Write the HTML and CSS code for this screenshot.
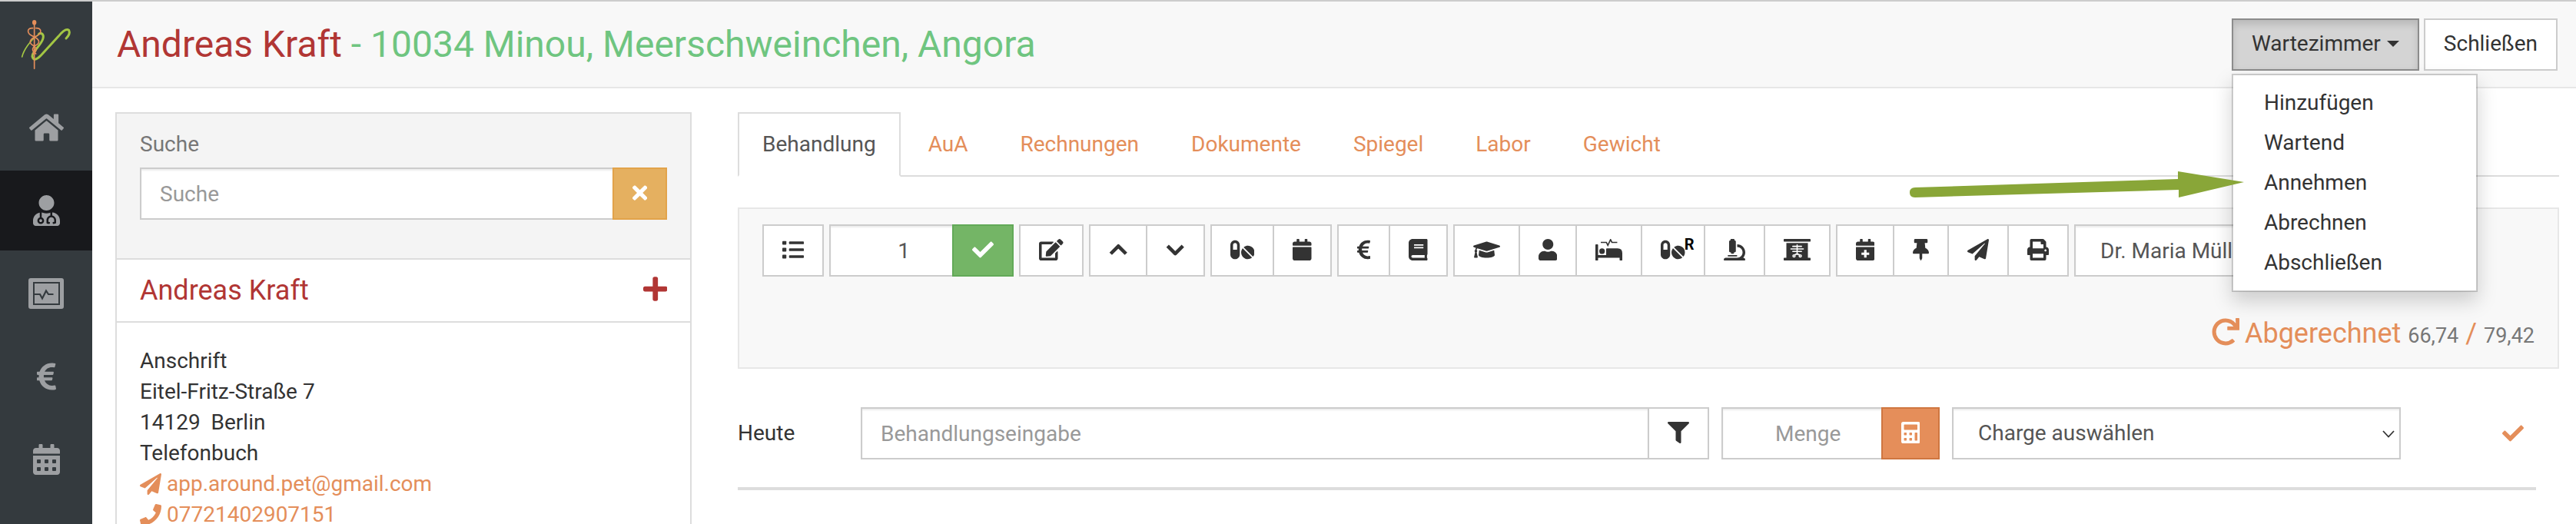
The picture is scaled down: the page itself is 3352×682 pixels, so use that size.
FILE: index.html
```
<!DOCTYPE html>
<html lang="de">
<head>
<meta charset="utf-8">
<title>Andreas Kraft – Behandlung</title>
<link rel="stylesheet" href="styles.css">
</head>
<body>
<div class="app">
  <nav class="sidebar" aria-label="Hauptmenü">
    <a class="brand" href="#" aria-label="Start">
      <svg viewBox="0 0 240 240" stroke-linecap="round">
        <path d="M92 72C104 66 112 76 108 90C102 116 64 142 66 160Q72 184 98 158L168 82Q196 48 209 58Q216 72 198 90" stroke="#a3c644" stroke-width="9"/>
        <path d="M26 162C32 138 56 98 92 74" stroke="#a3c644" stroke-width="5"/>
        <g stroke="#e58e5a" stroke-width="5">
          <path d="M74 30V208"/>
          <path d="M68 50C44 48 44 70 66 80C98 94 98 108 78 118C62 128 66 142 80 150"/>
          <path d="M80 50C104 48 104 70 84 80C52 94 52 108 70 118C86 128 84 142 68 150"/>
        </g>
        <ellipse cx="74" cy="28" rx="8" ry="10" fill="#e58e5a"/>
      </svg>
    </a>
    <a class="nav-item" href="#" aria-label="Start"><svg viewBox="0 0 576 512"><path d="M280.37 148.26L96 300.11V464a16 16 0 0 0 16 16l112.06-.29a16 16 0 0 0 15.92-16V368a16 16 0 0 1 16-16h64a16 16 0 0 1 16 16v95.64a16 16 0 0 0 16 16.05L464 480a16 16 0 0 0 16-16V300L295.67 148.26a12.19 12.19 0 0 0-15.3 0zM571.6 251.47L488 182.56V44.05a12 12 0 0 0-12-12h-56a12 12 0 0 0-12 12v72.61L318.47 43a48 48 0 0 0-61 0L4.34 251.47a12 12 0 0 0-1.6 16.9l25.5 31A12 12 0 0 0 45.15 301l235.22-193.74a12.19 12.19 0 0 1 15.3 0L530.9 301a12 12 0 0 0 16.9-1.6l25.5-31a12 12 0 0 0-1.7-16.93z"/></svg></a>
    <a class="nav-item active" href="#" aria-label="Patienten"><svg viewBox="0 0 448 512"><path d="M224 256c70.7 0 128-57.3 128-128S294.7 0 224 0 96 57.3 96 128s57.3 128 128 128zM104 424c0 13.3 10.7 24 24 24s24-10.7 24-24-10.7-24-24-24-24 10.7-24 24zm216-135.4v49c36.5 7.4 64 39.8 64 78.4v41.7c0 7.6-5.4 14.2-12.9 15.7l-32.2 6.4c-4.3.9-8.5-1.9-9.4-6.3l-3.1-15.7c-.9-4.3 1.9-8.6 6.3-9.4l19.3-3.9V416c0-62.8-96-65.1-96 1.9v26.7l19.3 3.9c4.3.9 7.1 5.1 6.3 9.4l-3.1 15.7c-.9 4.3-5.1 7.1-9.4 6.3l-31.2-4.2c-7.9-1.1-13.8-7.8-13.8-15.9V416c0-38.6 27.5-70.9 64-78.4v-45.2c-2.2.7-4.4 1.1-6.6 1.9-18 6.3-37.3 9.8-57.4 9.8s-39.4-3.5-57.4-9.8c-7.4-2.6-14.9-4.2-22.6-5.2v81.6c23.1 6.9 40 28.1 40 53.4 0 30.9-25.1 56-56 56s-56-25.1-56-56c0-25.3 16.9-46.5 40-53.4v-80.4C48.5 301 0 355.8 0 422.4v44.8C0 491.9 20.1 512 44.8 512h358.4c24.7 0 44.8-20.1 44.8-44.8v-44.8c0-72-56.8-130.3-128-133.8z"/></svg></a>
    <a class="nav-item" href="#" aria-label="Monitor"><svg viewBox="0 0 46 40"><path fill-rule="evenodd" d="M3 0H43Q46 0 46 3V37Q46 40 43 40H3Q0 40 0 37V3Q0 0 3 0ZM6 5V35H41V5Z"/><path d="M8 7H39V33H8Z"/><path d="M8 21H15L18 26.500L23 16.500L26 21H32.500" fill="none" stroke="#343a3e" stroke-width="2.200"/></svg></a>
    <a class="nav-item" href="#" aria-label="Finanzen"><svg viewBox="0 0 320 512"><path d="M310.706 413.765c-1.314-6.63-7.835-10.872-14.424-9.369-10.692 2.439-27.422 5.413-45.426 5.413-56.763 0-101.929-34.79-121.461-85.449h113.689a12 12 0 0 0 11.708-9.369l6.373-28.36c1.686-7.502-4.019-14.631-11.708-14.631H115.22c-1.21-14.328-1.414-28.287.137-42.245H261.95a12 12 0 0 0 11.723-9.434l6.512-29.755c1.638-7.484-4.061-14.566-11.723-14.566H130.184c20.633-44.991 62.69-75.03 117.619-75.03 14.486 0 28.564 2.25 37.851 4.145 6.216 1.268 12.347-2.498 14.002-8.623l11.991-44.368c1.822-6.741-2.465-13.616-9.326-14.917C290.217 34.912 270.71 32 249.635 32 152.451 32 74.03 92.252 45.075 176H12c-6.627 0-12 5.373-12 12v29.755c0 6.627 5.373 12 12 12h21.569c-1.009 13.607-1.181 29.287-.181 42.245H12c-6.627 0-12 5.373-12 12v28.36c0 6.627 5.373 12 12 12h30.114C67.139 414.692 145.264 480 249.635 480c26.301 0 48.562-4.544 61.101-7.788 6.167-1.595 10.027-7.708 8.788-13.957l-8.818-44.49z"/></svg></a>
    <a class="nav-item" href="#" aria-label="Kalender"><svg viewBox="0 0 448 512"><path fill-rule="evenodd" d="M0 464c0 26.500 21.500 48 48 48h352c26.500 0 48-21.500 48-48V192H0zM76 256h40q12 0 12 12v40q0 12-12 12H76q-12 0-12-12v-40q0-12 12-12zM204 256h40q12 0 12 12v40q0 12-12 12h-40q-12 0-12-12v-40q0-12 12-12zM332 256h40q12 0 12 12v40q0 12-12 12h-40q-12 0-12-12v-40q0-12 12-12zM76 384h40q12 0 12 12v40q0 12-12 12H76q-12 0-12-12v-40q0-12 12-12zM204 384h40q12 0 12 12v40q0 12-12 12h-40q-12 0-12-12v-40q0-12 12-12zM332 384h40q12 0 12 12v40q0 12-12 12h-40q-12 0-12-12v-40q0-12 12-12z"/><path d="M400 64h-48V16c0-8.800-7.200-16-16-16h-32c-8.800 0-16 7.200-16 16v48H160V16c0-8.800-7.200-16-16-16h-32c-8.800 0-16 7.200-16 16v48H48C21.500 64 0 85.500 0 112v48h448v-48c0-26.500-21.500-48-48-48z"/></svg></a>
  </nav>

  <div class="page">
    <header class="topbar">
      <h1 class="title">Andreas Kraft <span class="patient">- 10034 Minou, Meerschweinchen, Angora</span></h1>
      <div class="actions">
        <div class="dropdown">
          <button class="btn pressed" type="button" aria-expanded="true">Wartezimmer <span class="caret"></span></button>
          <ul class="menu">
            <li><a href="#">Hinzufügen</a></li>
            <li><a href="#">Wartend</a></li>
            <li><a href="#">Annehmen</a></li>
            <li><a href="#">Abrechnen</a></li>
            <li><a href="#">Abschließen</a></li>
          </ul>
          <svg class="pointer" viewBox="0 0 436 36" aria-hidden="true"><path d="M8 22L350 11V1L436 15L351 35V25L8 35Q1 35 1 28.500Q1 22 8 22Z" fill="#89a638"/></svg>
        </div>
        <button class="btn" type="button">Schließen</button>
      </div>
    </header>

    <main class="content">
      <aside class="panel">
        <div class="search">
          <label for="suche">Suche</label>
          <div class="joined">
            <input class="field grow" id="suche" type="text" placeholder="Suche">
            <button class="btn warning" type="button" aria-label="Leeren"><svg viewBox="0 0 352 512"><path d="M242.720 256l100.070-100.070c12.280-12.280 12.280-32.190 0-44.480l-22.240-22.240c-12.280-12.280-32.190-12.280-44.480 0L176 189.280 75.930 89.210c-12.280-12.280-32.190-12.280-44.480 0L9.210 111.450c-12.280 12.280-12.280 32.190 0 44.480L109.280 256 9.210 356.070c-12.280 12.280-12.280 32.190 0 44.480l22.240 22.240c12.280 12.280 32.200 12.280 44.480 0L176 322.720l100.070 100.070c12.280 12.280 32.200 12.280 44.480 0l22.240-22.240c12.280-12.280 12.280-32.190 0-44.480L242.720 256z"/></svg></button>
          </div>
        </div>
        <div class="owner">
          <h2>Andreas Kraft</h2>
          <a href="#" aria-label="Hinzufügen"><svg viewBox="0 0 448 512"><path d="M416 208H272V64c0-17.670-14.330-32-32-32h-32c-17.670 0-32 14.330-32 32v144H32c-17.670 0-32 14.330-32 32v32c0 17.670 14.330 32 32 32h144v144c0 17.670 14.330 32 32 32h32c17.670 0 32-14.330 32-32V304h144c17.670 0 32-14.330 32-32v-32c0-17.670-14.330-32-32-32z"/></svg></a>
        </div>
        <div class="address">
          <div>Anschrift</div>
          <div>Eitel-Fritz-Straße 7</div>
          <div>14129&nbsp; Berlin</div>
          <div>Telefonbuch</div>
          <a class="contact" href="#"><svg viewBox="0 0 512 512"><path d="M476 3.200L12.500 270.600c-18.100 10.400-15.800 35.600 2.200 43.200L121 358.400l287.300-253.200c5.500-4.900 13.300 2.600 8.600 8.300L176 407v80.500c0 23.600 28.500 32.900 42.500 15.800L282 426l124.600 52.200c14.200 6 30.400-2.900 33-18.200l72-432C515 7.800 493.300-6.800 476 3.200z"/></svg>app.around.pet@gmail.com</a>
          <a class="contact" href="#"><svg viewBox="0 0 512 512"><path d="M493.400 24.600l-104-24c-11.300-2.600-22.900 3.300-27.500 13.900l-48 112c-4.200 9.800-1.400 21.300 6.900 28l60.600 49.600c-36 76.700-98.900 140.500-177.200 177.200l-49.600-60.600c-6.800-8.300-18.200-11.100-28-6.900l-112 48C3.900 366.500-2 378.100.6 389.400l24 104C27.100 504.200 36.700 512 48 512c256.100 0 464-207.500 464-464 0-11.200-7.700-20.900-18.600-23.400z"/></svg>07721402907151</a>
        </div>
      </aside>

      <section class="work">
        <nav class="tabs" aria-label="Bereiche">
          <a class="tab current" href="#">Behandlung</a>
          <a class="tab" href="#">AuA</a>
          <a class="tab" href="#">Rechnungen</a>
          <a class="tab" href="#">Dokumente</a>
          <a class="tab" href="#">Spiegel</a>
          <a class="tab" href="#">Labor</a>
          <a class="tab" href="#">Gewicht</a>
        </nav>

        <div class="well">
          <div class="toolbar">
            <button class="btn" type="button" aria-label="Liste"><svg viewBox="0 0 512 512"><rect y="48" width="96" height="88" rx="16"/><rect y="212" width="96" height="88" rx="16"/><rect y="376" width="96" height="88" rx="16"/><rect x="160" y="60" width="352" height="64" rx="16"/><rect x="160" y="224" width="352" height="64" rx="16"/><rect x="160" y="388" width="352" height="64" rx="16"/></svg></button>
            <div class="joined">
              <input class="field count" type="text" value="1" aria-label="Anzahl">
              <button class="btn success" type="button" aria-label="Übernehmen"><svg viewBox="0 0 512 512"><path d="M173.898 439.404l-166.400-166.400c-9.997-9.997-9.997-26.206 0-36.204l36.203-36.204c9.997-9.998 26.207-9.998 36.204 0L192 312.690 432.095 72.596c9.997-9.997 26.207-9.997 36.204 0l36.203 36.204c9.997 9.997 9.997 26.206 0 36.204l-294.400 294.401c-9.998 9.997-26.207 9.997-36.204-.001z"/></svg></button>
            </div>
            <button class="btn" type="button" aria-label="Bearbeiten"><svg viewBox="0 0 576 512"><path d="M402.600 83.200l90.200 90.200c3.800 3.800 3.800 10 0 13.800L274.400 405.600l-92.800 10.300c-12.400 1.400-22.900-9.100-21.500-21.500l10.300-92.800L388.800 83.200c3.800-3.800 10-3.800 13.800 0zm162-22.900l-48.800-48.800c-15.200-15.200-39.900-15.200-55.200 0l-35.400 35.400c-3.800 3.800-3.800 10 0 13.800l90.200 90.200c3.800 3.800 10 3.800 13.800 0l35.400-35.400c15.200-15.300 15.200-40 0-55.200zM384 346.200V448H64V128h229.800c3.200 0 6.200-1.300 8.500-3.500l40-40c7.600-7.600 2.200-20.500-8.500-20.500H48C21.500 64 0 85.500 0 112v352c0 26.500 21.500 48 48 48h352c26.500 0 48-21.500 48-48V306.200c0-10.700-12.900-16-20.500-8.500l-40 40c-2.200 2.300-3.500 5.300-3.500 8.500z"/></svg></button>
            <div class="joined">
              <button class="btn" type="button" aria-label="Nach oben"><svg viewBox="0 0 448 512"><path d="M42 352L224 170L406 352" fill="none" stroke="currentColor" stroke-width="84" stroke-linejoin="round"/></svg></button>
              <button class="btn" type="button" aria-label="Nach unten"><svg viewBox="0 0 448 512"><path d="M42 166L224 348L406 166" fill="none" stroke="currentColor" stroke-width="84" stroke-linejoin="round"/></svg></button>
            </div>
            <div class="joined">
              <button class="btn" type="button" aria-label="Medikamente"><svg viewBox="0 0 576 512"><path d="M112 32C50.100 32 0 82.100 0 144v224c0 61.900 50.100 112 112 112s112-50.100 112-112V144c0-61.900-50.100-112-112-112zm48 224H64V144c0-26.500 21.500-48 48-48s48 21.500 48 48v112zm139.700-29.700c-3.500-3.500-9.400-3.100-12.300.8-45.300 62.500-40.400 150.100 15.900 206.400 56.300 56.300 143.900 61.200 206.400 15.900 4-2.900 4.300-8.800.8-12.300L299.700 226.300zm229.800-19c-56.300-56.300-143.900-61.200-206.400-15.900-4 2.900-4.300 8.800-.8 12.300l210.800 210.800c3.500 3.500 9.400 3.100 12.300-.8 45.300-62.600 40.500-150.100-15.900-206.400z"/></svg></button>
              <button class="btn" type="button" aria-label="Termin"><svg viewBox="0 0 448 512"><path d="M12 192h424c6.600 0 12 5.400 12 12v260c0 26.500-21.500 48-48 48H48c-26.500 0-48-21.500-48-48V204c0-6.600 5.400-12 12-12zm436-44v-36c0-26.500-21.500-48-48-48h-48V12c0-6.600-5.400-12-12-12h-40c-6.600 0-12 5.400-12 12v52H160V12c0-6.600-5.400-12-12-12h-40c-6.600 0-12 5.400-12 12v52H48C21.500 64 0 85.500 0 112v36c0 6.600 5.400 12 12 12h424c6.600 0 12-5.400 12-12z"/></svg></button>
            </div>
            <div class="joined">
              <button class="btn" type="button" aria-label="Preis"><svg viewBox="0 0 320 512"><path d="M310.706 413.765c-1.314-6.630-7.835-10.872-14.424-9.369-10.692 2.439-27.422 5.413-45.426 5.413-56.763 0-101.929-34.790-121.461-85.449h113.689a12 12 0 0 0 11.708-9.369l6.373-28.360c1.686-7.502-4.019-14.631-11.708-14.631H115.220c-1.210-14.328-1.414-28.287.137-42.245H261.950a12 12 0 0 0 11.723-9.434l6.512-29.755c1.638-7.484-4.061-14.566-11.723-14.566H130.184c20.633-44.991 62.690-75.030 117.619-75.030 14.486 0 28.564 2.250 37.851 4.145 6.216 1.268 12.347-2.498 14.002-8.623l11.991-44.368c1.822-6.741-2.465-13.616-9.326-14.917C290.217 34.912 270.710 32 249.635 32 152.451 32 74.030 92.252 45.075 176H12c-6.627 0-12 5.373-12 12v29.755c0 6.627 5.373 12 12 12h21.569c-1.009 13.607-1.181 29.287-.181 42.245H12c-6.627 0-12 5.373-12 12v28.360c0 6.627 5.373 12 12 12h30.114C67.139 414.692 145.264 480 249.635 480c26.301 0 48.562-4.544 61.101-7.788 6.167-1.595 10.027-7.708 8.788-13.957l-8.818-44.490z"/></svg></button>
              <button class="btn" type="button" aria-label="Buch"><svg viewBox="0 0 448 512"><path d="M448 360V24c0-13.300-10.700-24-24-24H96C43 0 0 43 0 96v320c0 53 43 96 96 96h328c13.300 0 24-10.700 24-24v-16c0-7.500-3.500-14.300-8.900-18.700-4.200-15.400-4.200-59.300 0-74.700 5.400-4.300 8.900-11.100 8.900-18.600zM128 134c0-3.300 2.700-6 6-6h212c3.300 0 6 2.700 6 6v20c0 3.300-2.700 6-6 6H134c-3.300 0-6-2.700-6-6v-20zm0 64c0-3.300 2.700-6 6-6h212c3.300 0 6 2.700 6 6v20c0 3.300-2.700 6-6 6H134c-3.300 0-6-2.700-6-6v-20zm253.400 250H96c-17.700 0-32-14.300-32-32 0-17.600 14.400-32 32-32h285.400c-1.900 17.100-1.900 46.900 0 64z"/></svg></button>
            </div>
            <div class="joined">
              <button class="btn" type="button" aria-label="Diagnose"><svg viewBox="0 0 640 512"><path d="M622.340 153.200L343.400 67.500c-15.200-4.670-31.600-4.670-46.790 0L17.660 153.200c-23.540 7.230-23.540 38.360 0 45.590l48.630 14.940c-10.670 13.190-17.230 29.280-17.880 46.900C38.780 266.150 32 276.110 32 288c0 10.780 5.680 19.850 13.860 25.650L20.330 428.530C18.110 438.520 25.710 448 35.940 448h56.110c10.240 0 17.840-9.480 15.620-19.470L82.140 313.650C90.320 307.850 96 298.780 96 288c0-11.570-6.470-21.250-15.660-26.870.76-15.020 8.440-28.300 20.690-36.720L296.600 284.500c9.060 2.780 26.440 6.250 46.790 0l278.950-85.700c23.550-7.240 23.550-38.360 0-45.600zM352.790 315.090c-28.530 8.760-52.840 3.920-65.590 0l-145.020-44.550L128 384c0 35.350 85.960 64 192 64s192-28.650 192-64l-14.180-113.470-145.030 44.560z"/></svg></button>
              <button class="btn" type="button" aria-label="Person"><svg viewBox="0 0 448 512"><path d="M224 256c70.700 0 128-57.300 128-128S294.700 0 224 0 96 57.300 96 128s57.300 128 128 128zm89.600 32h-16.700c-22.200 10.200-46.900 16-72.900 16s-50.600-5.800-72.900-16h-16.700C60.200 288 0 348.200 0 422.400V464c0 26.500 21.500 48 48 48h352c26.500 0 48-21.500 48-48v-41.600c0-74.200-60.200-134.400-134.400-134.400z"/></svg></button>
              <button class="btn" type="button" aria-label="Station"><svg viewBox="0 0 640 512"><path d="M16 128H48Q64 128 64 144V384H256V240Q256 224 272 224H528Q640 224 640 336V496Q640 512 624 512H592Q576 512 576 496V448H64V496Q64 512 48 512H16Q0 512 0 496V144Q0 128 16 128Z"/><circle cx="158" cy="292" r="66"/><path d="M128 82H262L296 152L360 16L394 82H520" fill="none" stroke="currentColor" stroke-width="30"/></svg></button>
              <button class="btn badge-host" type="button" aria-label="Rezept"><svg viewBox="0 0 576 512"><path d="M112 32C50.100 32 0 82.100 0 144v224c0 61.900 50.100 112 112 112s112-50.100 112-112V144c0-61.900-50.100-112-112-112zm48 224H64V144c0-26.500 21.500-48 48-48s48 21.500 48 48v112zm139.700-29.700c-3.500-3.500-9.400-3.100-12.300.8-45.300 62.500-40.400 150.100 15.900 206.400 56.300 56.300 143.900 61.200 206.400 15.900 4-2.900 4.300-8.800.8-12.300L299.700 226.300zm229.800-19c-56.300-56.300-143.900-61.200-206.400-15.900-4 2.900-4.300 8.800-.8 12.300l210.800 210.800c3.500 3.500 9.400 3.100 12.300-.8 45.300-62.600 40.500-150.100-15.900-206.400z"/></svg><span class="badge">R</span></button>
              <button class="btn" type="button" aria-label="Labor"><svg viewBox="0 0 512 512"><path d="M160 320h12v16c0 8.840 7.160 16 16 16h40c8.840 0 16-7.160 16-16v-16h12c17.670 0 32-14.330 32-32V64c0-17.670-14.330-32-32-32V16c0-8.840-7.160-16-16-16h-64c-8.840 0-16 7.160-16 16v16c-17.670 0-32 14.330-32 32v224c0 17.670 14.330 32 32 32zm304 128h-1.290C493.240 413.990 512 369.200 512 320c0-105.880-86.120-192-192-192v64c70.580 0 128 57.420 128 128s-57.420 128-128 128H48c-26.510 0-48 21.490-48 48 0 8.840 7.160 16 16 16h480c8.840 0 16-7.160 16-16 0-26.510-21.490-48-48-48zm-360-32h208c4.420 0 8-3.580 8-8v-16c0-4.420-3.580-8-8-8H104c-4.420 0-8 3.580-8 8v16c0 4.420 3.580 8 8 8z"/></svg></button>
              <button class="btn" type="button" aria-label="Röntgen"><svg viewBox="0 0 640 512"><rect width="640" height="64" rx="14"/><rect y="448" width="640" height="64" rx="14"/><path d="M64 96H576V460H64Z"/><g fill="none" stroke="#fff" stroke-width="28" stroke-linecap="round"><path d="M320 142V372M216 176H424M172 236H468M216 296H424M320 352L270 376M320 352L370 376"/><circle cx="246" cy="404" r="26"/><circle cx="394" cy="404" r="26"/></g></svg></button>
            </div>
            <div class="joined">
              <button class="btn" type="button" aria-label="Termin anlegen"><svg viewBox="0 0 448 512"><path d="M12 192h424c6.600 0 12 5.400 12 12v260c0 26.500-21.500 48-48 48H48c-26.500 0-48-21.500-48-48V204c0-6.600 5.400-12 12-12zm436-44v-36c0-26.500-21.500-48-48-48h-48V12c0-6.600-5.400-12-12-12h-40c-6.600 0-12 5.400-12 12v52H160V12c0-6.600-5.400-12-12-12h-40c-6.600 0-12 5.400-12 12v52H48C21.500 64 0 85.500 0 112v36c0 6.600 5.400 12 12 12h424c6.600 0 12-5.400 12-12z"/><path d="M224 260V444M132 352H316" stroke="#fff" stroke-width="58"/></svg></button>
              <button class="btn" type="button" aria-label="Anheften"><svg viewBox="0 0 384 512"><path d="M298.028 214.267L285.793 96H328c13.255 0 24-10.745 24-24V24c0-13.255-10.745-24-24-24H56C42.745 0 32 10.745 32 24v48c0 13.255 10.745 24 24 24h42.207L85.972 214.267C37.465 236.820 0 277.261 0 328c0 13.255 10.745 24 24 24h136v104.007c0 1.242.289 2.467.845 3.578l24 48c2.941 5.882 11.364 5.893 14.311 0l24-48a8.008 8.008 0 0 0 .845-3.578V352h136c13.255 0 24-10.745 24-24-.001-51.183-37.983-91.420-85.973-113.733z"/></svg></button>
              <button class="btn" type="button" aria-label="Senden"><svg viewBox="0 0 512 512"><path d="M476 3.200L12.500 270.600c-18.100 10.400-15.800 35.600 2.200 43.200L121 358.400l287.300-253.200c5.500-4.900 13.300 2.600 8.600 8.300L176 407v80.500c0 23.600 28.500 32.900 42.500 15.800L282 426l124.600 52.200c14.200 6 30.400-2.900 33-18.200l72-432C515 7.800 493.300-6.800 476 3.200z"/></svg></button>
              <button class="btn" type="button" aria-label="Drucken"><svg viewBox="0 0 512 512"><path d="M448 192V77.250c0-8.490-3.370-16.620-9.370-22.630L393.370 9.370c-6-6-14.140-9.370-22.630-9.370H96C78.330 0 64 14.330 64 32v160c-35.350 0-64 28.650-64 64v112c0 8.840 7.160 16 16 16h48v96c0 17.670 14.330 32 32 32h320c17.670 0 32-14.330 32-32v-96h48c8.840 0 16-7.160 16-16V256c0-35.350-28.650-64-64-64zm-64 256H128v-96h256v96zm0-224H128V64h192v48c0 8.840 7.160 16 16 16h48v96zm48 72c-13.250 0-24-10.750-24-24 0-13.260 10.750-24 24-24s24 10.740 24 24c0 13.250-10.750 24-24 24z"/></svg></button>
            </div>
            <input class="field doctor" type="text" value="Dr. Maria Müller" aria-label="Behandler">
          </div>
          <div class="totals">
            <a href="#" aria-label="Aktualisieren"><svg viewBox="0 0 512 512"><path d="M500.330 0h-47.410a12 12 0 0 0-12 12.570l4 82.760A247.420 247.420 0 0 0 256 8C119.340 8 7.900 119.530 8 256.190 8.100 393.070 119.100 504 256 504a247.100 247.100 0 0 0 166.180-63.910 12 12 0 0 0 .48-17.430l-34-34a12 12 0 0 0-16.380-.55A176 176 0 1 1 402.100 157.800l-101.530-4.870a12 12 0 0 0-12.570 12v47.410a12 12 0 0 0 12 12h200.330a12 12 0 0 0 12-12V12a12 12 0 0 0-12-12z"/></svg></a>
            <span>Abgerechnet <small>66,74</small> / <small>79,42</small></span>
          </div>
        </div>

        <form class="entry">
          <label for="eingabe">Heute</label>
          <div class="joined">
            <input class="field grow" id="eingabe" type="text" placeholder="Behandlungseingabe">
            <button class="btn" type="button" aria-label="Filter"><svg viewBox="0 0 512 512"><path d="M487.976 0H24.028C2.710 0-8.047 25.866 7.058 40.971L192 225.941V432c0 7.831 3.821 15.170 10.237 19.662l80 55.980C298.020 518.690 320 507.493 320 487.980V225.941l184.947-184.970C520.021 25.896 509.338 0 487.976 0z"/></svg></button>
          </div>
          <div class="joined">
            <input class="field grow amount" type="text" placeholder="Menge" aria-label="Menge">
            <button class="btn primary" type="button" aria-label="Rechner"><svg viewBox="0 0 448 512"><path fill-rule="evenodd" d="M400 0H48Q0 0 0 48V464Q0 512 48 512H400Q448 512 448 464V48Q448 0 400 0ZM76 64H372Q384 64 384 76V180Q384 192 372 192H76Q64 192 64 180V76Q64 64 76 64ZM64 268Q64 256 76 256H116Q128 256 128 268V308Q128 320 116 320H76Q64 320 64 308ZM192 268Q192 256 204 256H244Q256 256 256 268V308Q256 320 244 320H204Q192 320 192 308ZM320 268Q320 256 332 256H372Q384 256 384 268V436Q384 448 372 448H332Q320 448 320 436ZM64 396Q64 384 76 384H116Q128 384 128 396V436Q128 448 116 448H76Q64 448 64 436ZM192 396Q192 384 204 384H244Q256 384 256 396V436Q256 448 244 448H204Q192 448 192 436Z"/></svg></button>
          </div>
          <div class="select-wrap">
            <select class="field" aria-label="Charge"><option>Charge auswählen</option></select>
            <svg class="arrow" viewBox="0 0 16 10"><path d="M1 1L8 8.500L15 1" fill="none" stroke="currentColor" stroke-width="1.800"/></svg>
          </div>
          <button class="confirm" type="button" aria-label="Speichern"><svg viewBox="0 0 512 512"><path d="M173.898 439.404l-166.400-166.400c-9.997-9.997-9.997-26.206 0-36.204l36.203-36.204c9.997-9.998 26.207-9.998 36.204 0L192 312.690 432.095 72.596c9.997-9.997 26.207-9.997 36.204 0l36.203 36.204c9.997 9.997 9.997 26.206 0 36.204l-294.400 294.401c-9.998 9.997-26.207 9.997-36.204-.001z"/></svg></button>
        </form>
      </section>
    </main>
  </div>
</div>
</body>
</html>
```

FILE: styles.css
```
* { box-sizing: border-box; }

body {
  margin: 0;
  font: 28px/40px Roboto, "Liberation Sans", sans-serif;
  color: #333;
  background: #fff;
}

a { color: #e48e5a; text-decoration: none; }
h1, h2, ul { margin: 0; padding: 0; font-weight: 400; }
input, select, button { font: inherit; margin: 0; border-radius: 0; }
svg { display: block; height: 28px; fill: currentColor; }

.app {
  display: flex;
  height: 100vh;
  overflow: hidden;
  border-top: 2px solid #ccc;
}

/* Sidebar */
.sidebar {
  flex: 0 0 120px;
  display: flex;
  flex-direction: column;
  gap: 4px;
  background: #343a3e;
}
.brand { display: flex; justify-content: center; padding: 18px 0 10px; }
.brand svg { height: 80px; fill: none; }
.nav-item {
  display: flex;
  align-items: center;
  justify-content: center;
  height: 104px;
  flex: none;
  color: #9d9fa2;
}
.nav-item svg { height: 40px; }
.nav-item.active { background: #18191c; }

/* Header */
.page { flex: 1; min-width: 0; }
.topbar {
  display: flex;
  align-items: center;
  justify-content: space-between;
  padding: 22px 24px 21px 32px;
  background: #f8f8f8;
  border-bottom: 2px solid #e7e7e7;
}
.title { font-size: 48px; line-height: 52px; color: #b13634; }
.patient { color: #6fc580; }
.actions { display: flex; gap: 6px; }

/* Controls */
.btn {
  display: flex;
  align-items: center;
  justify-content: center;
  flex: none;
  height: 68px;
  padding: 0 24px 2px;
  color: #333;
  background: #fff;
  border: 2px solid #ccc;
}
.btn.pressed {
  background: #d4d4d4;
  border-color: #8c8c8c;
  box-shadow: inset 0 6px 10px rgba(0, 0, 0, .125);
}
.btn.warning { color: #fff; background: #e5b060; border-color: #e2a34a; }
.btn.success { color: #fff; background: #74b566; border-color: #62a958; }
.btn.primary { color: #fff; background: #e58e5a; border-color: #cf7640; }
.caret {
  margin-left: 8px;
  border: 8px solid transparent;
  border-top-color: #333;
  border-bottom: 0;
}
.field {
  width: 100%;
  min-width: 0;
  height: 68px;
  padding: 0 24px;
  color: #555;
  background: #fff;
  border: 2px solid #ccc;
  box-shadow: inset 0 2px 2px rgba(0, 0, 0, .075);
}
.field::placeholder { color: #999; opacity: 1; }
.joined { display: flex; }
.joined > * + * { margin-left: -2px; }
.grow { flex: 1; }

/* Waiting room menu */
.dropdown { position: relative; z-index: 5; }
.menu {
  position: absolute;
  top: 72px;
  left: 0;
  width: 320px;
  padding: 10px 0;
  list-style: none;
  background: #fff;
  background-clip: padding-box;
  border: 2px solid rgba(0, 0, 0, .18);
  box-shadow: 0 12px 24px rgba(0, 0, 0, .175);
}
.menu a { display: block; padding: 6px 40px; color: #333; }
.pointer {
  position: absolute;
  top: 198px;
  left: -420px;
  width: 436px;
  height: 36px;
}

/* Content */
.content {
  display: grid;
  grid-template-columns: 750fr 2370fr;
  gap: 60px;
  align-items: start;
  padding: 31px 22px 0 30px;
}
.panel { border: 2px solid #ddd; min-height: 600px; }
.search {
  padding: 20px 30px 50px;
  color: #777;
  background: #f4f4f4;
  border-bottom: 2px solid #ddd;
}
.search label { display: block; margin-bottom: 10px; }
.owner {
  display: flex;
  justify-content: space-between;
  padding: 20px 30px;
  border-bottom: 2px solid #ddd;
}
.owner h2 { font-size: 36px; line-height: 40px; color: #b13634; }
.owner a { color: #b13634; }
.owner svg { height: 36px; }
.address { padding: 30px; }
.contact { display: flex; align-items: center; gap: 7px; }

/* Tabs */
.tabs { display: flex; gap: 4px; border-bottom: 2px solid #ddd; }
.tab { padding: 20px 30px; margin-bottom: -2px; border: 2px solid transparent; }
.tab.current {
  color: #555;
  background: #fff;
  border-color: #ddd;
  border-bottom-color: #fff;
}

/* Toolbar */
.well {
  margin-top: 40px;
  padding: 20px 30px 24px;
  background: #f8f8f8;
  border: 2px solid #e7e7e7;
}
.toolbar { display: flex; gap: 7px; }
.count { width: 162px; padding: 0 0 0 32px; text-align: center; }
.doctor { width: 320px; padding: 0 32px; }
.badge-host { position: relative; }
.badge {
  position: absolute;
  top: 12px;
  right: 12px;
  font-size: 20px;
  line-height: 24px;
  font-weight: 700;
  color: #000;
}
.totals {
  display: flex;
  justify-content: flex-end;
  gap: 7px;
  margin-top: 54px;
  font-size: 36px;
  color: #e48e5a;
}
.totals svg { height: 36px; }
.totals small { font-size: 27px; line-height: 28px; color: #777; }

/* Entry row */
.entry {
  display: grid;
  grid-template-columns: 144px 1104fr 284fr 584fr 160px;
  gap: 16px;
  align-items: center;
  margin: 50px 30px 0 0;
  padding-bottom: 36px;
  border-bottom: 4px solid #ddd;
}
.amount { padding: 0 0 0 16px; text-align: center; }
.select-wrap { position: relative; }
select.field { appearance: none; padding: 0 32px; }
.arrow {
  position: absolute;
  top: 30px;
  right: 8px;
  width: 16px;
  height: 10px;
  pointer-events: none;
}
.confirm {
  justify-self: end;
  padding: 0 16px 0 0;
  color: #e48e5a;
  background: none;
  border: 0;
}
```
